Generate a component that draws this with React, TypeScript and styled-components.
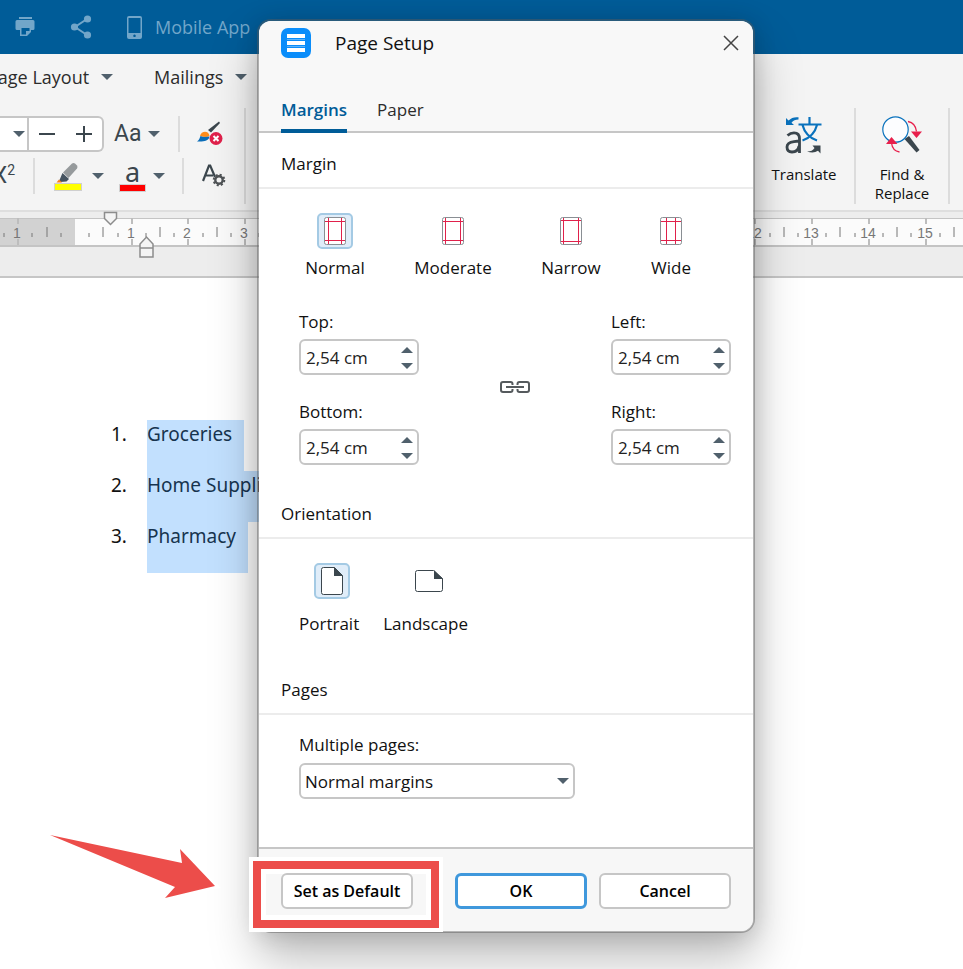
import React, { useState } from "react";
import styled, { createGlobalStyle, css } from "styled-components";

const UI = `"Open Sans", "Noto Sans", sans-serif`;
const SLATE = "#50606c";

const GlobalStyle = createGlobalStyle`
  *, *::before, *::after { box-sizing: border-box; }
  body { margin: 0; background: #fff; font-family: ${UI}; font-size: 17px; color: #111; }
  button, input, select { font: inherit; color: inherit; margin: 0; padding: 0; }
  button { background: none; border: 0; }
  svg { display: block; flex: none; }
`;

const Page = styled.div`
  position: relative;
  display: flex;
  flex-direction: column;
  min-height: 100vh;
  overflow: hidden;
`;

/* ---------- application window ---------- */

const TopBar = styled.header`
  display: flex;
  align-items: center;
  height: 54px;
  padding-left: 15px;
  gap: 35px;
  background: #005c98;
  color: #72a6c9;
`;

const TopButton = styled.button`
  display: flex;
  align-items: center;
  gap: 13px;
  color: inherit;
  font-size: 18px;
`;

const Menu = styled.nav`
  display: flex;
  align-items: center;
  height: 46px;
  margin-left: -13px;
  gap: 41px;
`;

const MenuButton = styled.button`
  display: flex;
  align-items: center;
  gap: 12px;
  font-size: 18px;
  color: #2c2c2c;
  white-space: nowrap;
`;

const Toolbar = styled.div`
  background: #f4f4f4;
  border-bottom: 2px solid #dedede;
`;

const Ribbon = styled.div`
  display: flex;
  height: 110px;
  padding: 8px 13px 6px 0;
`;

const FontTools = styled.div`
  display: flex;
  flex-direction: column;
  padding-top: 8px;
  gap: 6px;
  width: 244px;
`;

const ToolRow = styled.div`
  display: flex;
  align-items: center;
  height: 36px;
`;

const SizeBox = styled.div`
  display: flex;
  width: 104px;
  height: 36px;
  background: #fff;
  border: 2px solid #c6c6c6;
  border-left: 0;
  border-radius: 0 6px 6px 0;
`;

const SizeButton = styled.button<{ $narrow?: boolean }>`
  display: flex;
  align-items: center;
  justify-content: center;
  flex: ${(p) => (p.$narrow ? "none" : 1)};
  width: ${(p) => (p.$narrow ? "29px" : "auto")};
  ${(p) =>
    p.$narrow &&
    css`
      padding-left: 11px;
      border-right: 2px solid #c6c6c6;
    `}
`;

const ToolButton = styled.button<{ $left?: number; $gap?: number }>`
  display: flex;
  align-items: center;
  gap: ${(p) => p.$gap ?? 8}px;
  margin-left: ${(p) => p.$left ?? 0}px;
  color: #3b464d;
  font-family: Roboto, sans-serif;
  font-size: 23px;
  line-height: 28px;
`;

const Rule = styled.span<{ $left?: number }>`
  flex: none;
  align-self: stretch;
  width: 2px;
  margin-left: ${(p) => p.$left ?? 0}px;
  background: #dcdcdc;
`;

const Superscript = styled.span`
  width: 15px;
  display: flex;
  justify-content: flex-end;
  sup { font-size: 14px; line-height: 16px; }
`;

const FontColor = styled.span`
  display: flex;
  flex-direction: column;
  align-items: center;
  width: 27px;
  font-family: "Noto Sans", sans-serif;
  font-size: 27px;
  line-height: 24px;
  &::after {
    content: "";
    width: 27px;
    height: 8px;
    background: #f00;
    border: 1px solid #d0d0d0;
  }
`;

const Spacer = styled.div`
  flex: 1;
`;

const BigTool = styled.button<{ $width: number }>`
  display: flex;
  flex-direction: column;
  align-items: center;
  gap: 11px;
  width: ${(p) => p.$width}px;
  padding-top: 8px;
  font-size: 15px;
  line-height: 19px;
  color: #111;
`;

const RulerStrip = styled.div`
  height: 66px;
  padding-top: 6px;
  background: #ededed;
  border-bottom: 2px solid #c6c6c6;
`;

const RulerSvg = styled.svg`
  width: 100%;
  height: 29px;
  overflow: visible;
  text { font: 14px "Liberation Sans", sans-serif; fill: #777; }
`;

const Document = styled.main`
  flex: 1;
  padding: 142px 0 0 111px;
`;

const List = styled.ol`
  list-style: none;
  margin: 0;
  padding: 0;
  font-family: "Noto Sans", sans-serif;
  font-size: 19px;
  line-height: 28px;
`;

const Item = styled.li`
  display: flex;
  height: 51px;
`;

const Marker = styled.span`
  width: 36px;
`;

const Selected = styled.span`
  padding-right: 12px;
  background: #c2e0fe;
  color: #17344f;
`;

/* ---------- dialog ---------- */

const Dialog = styled.section`
  position: absolute;
  top: 19px;
  left: 257px;
  width: 498px;
  border: 2px solid rgba(90, 90, 90, 0.45);
  border-radius: 14px;
  background: #fff;
  background-clip: padding-box;
  box-shadow: 0 26px 48px rgba(0, 0, 0, 0.26), 0 2px 22px rgba(0, 0, 0, 0.14);
`;

const DialogHead = styled.header`
  padding: 7px 14px 0 22px;
  background: #f8f8f8;
  border-bottom: 2px solid #c6c6c6;
  border-radius: 12px 12px 0 0;
`;

const TitleRow = styled.div`
  display: flex;
  align-items: center;
  height: 30px;
`;

const Title = styled.h1`
  flex: 1;
  margin: 0 0 0 24px;
  font-size: 19px;
  font-weight: 400;
`;

const Close = styled.button`
  display: flex;
`;

const Tabs = styled.div`
  display: flex;
  gap: 30px;
  height: 73px;
  padding-top: 31px;
`;

const Tab = styled.button<{ $active?: boolean }>`
  height: 44px;
  border-bottom: 4px solid ${(p) => (p.$active ? "#005c98" : "transparent")};
  font-weight: ${(p) => (p.$active ? 600 : 400)};
  color: ${(p) => (p.$active ? "#005c98" : "#2c2c2c")};
`;

const SectionTitle = styled.h2`
  height: 56px;
  margin: 0;
  padding: 19px 22px 0;
  border-bottom: 2px solid #ececec;
  font-size: 17px;
  line-height: 24px;
  font-weight: 400;
`;

const Presets = styled.div`
  display: grid;
  grid-template-columns: 118px 118px 118px 82px;
  height: 121px;
  padding: 24px 17px 0;
`;

const Orientations = styled.div`
  display: flex;
  gap: 24px;
  height: 120px;
  padding: 24px 40px 0;
`;

const Choice = styled.label<{ $gap: number; $shift?: number }>`
  display: flex;
  flex-direction: column;
  align-items: center;
  gap: ${(p) => p.$gap}px;
  line-height: 24px;
  white-space: nowrap;
  svg { margin-left: ${(p) => p.$shift ?? 0}px; }
`;

const Radio = styled.input`
  position: absolute;
  opacity: 0;
  width: 1px;
  height: 1px;
`;

const Fields = styled.div`
  display: grid;
  grid-template-columns: 120px 1fr 120px;
  row-gap: 30px;
  padding: 0 22px 23px 40px;
`;

const Field = styled.div`
  display: flex;
  flex-direction: column;
  height: 60px;
  label { line-height: 24px; }
`;

const NumberBox = styled.div`
  display: flex;
  flex: none;
  height: 36px;
  margin-top: 5px;
  padding-right: 4px;
  background: #fff;
  border: 2px solid #c6c6c6;
  border-radius: 6px;
  input {
    flex: 1;
    min-width: 0;
    padding-left: 5px;
    border: 0;
    background: none;
    outline: 0;
    color: #222;
  }
`;

const Steps = styled.div`
  display: flex;
  flex-direction: column;
  justify-content: center;
  gap: 10px;
  padding-top: 2px;
  button { display: flex; }
`;

const Link = styled.button`
  grid-column: 2;
  grid-row: 1 / span 2;
  display: flex;
  align-items: center;
  justify-content: center;
  padding-top: 3px;
`;

const PagesBody = styled.div`
  display: flex;
  flex-direction: column;
  height: 132px;
  padding: 18px 40px 0;
  label { line-height: 24px; }
`;

const SelectBox = styled.div`
  position: relative;
  width: 276px;
  margin-top: 6px;
  select {
    width: 100%;
    height: 36px;
    padding: 0 30px 0 4px;
    appearance: none;
    background: #fff;
    border: 2px solid #c6c6c6;
    border-radius: 6px;
  }
  svg {
    position: absolute;
    top: 15px;
    right: 6px;
    pointer-events: none;
  }
`;

const Footer = styled.footer`
  display: flex;
  align-items: flex-start;
  gap: 12px;
  height: 84px;
  padding: 24px 22px 0;
  background: #f7f7f7;
  border-top: 2px solid #c6c6c6;
  border-radius: 0 0 12px 12px;
`;

const Action = styled.button<{ $primary?: boolean }>`
  display: block;
  width: 132px;
  height: 36px;
  background: #fff;
  border: ${(p) => (p.$primary ? "3px solid #3f98dc" : "2px solid #c6c6c6")};
  border-radius: 6px;
  font-size: 16px;
  font-weight: 600;
  color: #000;
  white-space: nowrap;
`;

const Highlighted = styled.div`
  position: relative;
  margin-right: auto;
`;

const Frame = styled.span`
  position: absolute;
  inset: -12px -26px -19px -28px;
  border: 8px solid #ec4d4a;
  box-shadow: 0 0 0 4px #fff, inset 0 0 0 5px #fff;
  pointer-events: none;
`;

const FrontAction = styled(Action)`
  position: relative;
  z-index: 1;
`;

const Pointer = styled.svg`
  position: absolute;
  left: 45px;
  top: 830px;
  pointer-events: none;
`;

/* ---------- drawings ---------- */

const Caret = ({ up = false }: { up?: boolean }) => (
  <svg width="12" height="6" viewBox="0 0 12 6" aria-hidden="true">
    <path d={up ? "M0 6 6 0l6 6z" : "M0 0h12L6 6z"} fill={SLATE} />
  </svg>
);

const PrintIcon = () => (
  <svg width="20" height="20" viewBox="0 0 20 20" fill="currentColor">
    <path d="M4 0h13v2H4z" />
    <path
      fillRule="evenodd"
      d="M2 3h16q1.500 0 1.500 1.500v7q0 1.500-1.500 1.500h-2v2l-4 4H5v-6H2Q.5 13 .5 11.500v-7Q.5 3 2 3zM6.500 11v6.500h4.500V14h3.500v-3z"
    />
  </svg>
);

const ShareIcon = () => (
  <svg width="22" height="24" viewBox="0 0 22 24">
    <path d="M17 4 5 12l12 8" fill="none" stroke="currentColor" strokeWidth="2" />
    <g fill="currentColor">
      <circle cx="17.500" cy="4" r="3.600" />
      <circle cx="4.500" cy="12" r="3.600" />
      <circle cx="17.500" cy="20" r="3.600" />
    </g>
  </svg>
);

const PhoneIcon = () => (
  <svg width="15" height="23" viewBox="0 0 15 23">
    <path
      fillRule="evenodd"
      fill="currentColor"
      d="M2 0h11q2 0 2 2v19q0 2-2 2H2q-2 0-2-2V2q0-2 2-2zM1.500 2v15h12V2zM7.500 18.500a1.300 1.300 0 1 0 .01 0z"
    />
  </svg>
);

const BrushIcon = () => (
  <svg width="28" height="26" viewBox="0 0 28 26">
    <path d="M22 0.500l1 1.500L14 11.500 11 9z" fill="#3b464d" />
    <path d="M3 15C4 9.500 12 9 12.500 15q-3 2-9.500 0z" fill="#ff8c1a" />
    <path d="M3.500 15q3 1.500 9 .5C12 20 6 21 0 20.500 2.500 19 2.500 17 3.500 15z" fill="#0a6db8" />
    <circle cx="19" cy="17.500" r="6.500" fill="#e0214b" />
    <path d="M16.500 15l5 5m0-5l-5 5" stroke="#fff" strokeWidth="2" />
  </svg>
);

const HighlighterIcon = () => (
  <svg width="28" height="29" viewBox="0 0 28 29">
    <path d="M9 10.500 18 1.500q1.500-1 3 0l2 2q1 1.500 0 3L14.500 16z" fill="#969a9c" />
    <path d="M8.500 11 15 17l-2.500 2.500-6.500.5L5.500 18z" fill="#455360" />
    <path d="M5 17.500 8 20.500H2.500z" fill="#ff7f1a" />
    <rect x=".5" y="21.500" width="27" height="7" fill="#ff0" stroke="#cfcfcf" />
  </svg>
);

const TextEffectsIcon = () => (
  <svg width="24" height="24" viewBox="0 0 24 24">
    <path d="M1 17 7 1.500h1.200L13 13M3 11.500h8" fill="none" stroke="#3b464d" strokeWidth="2.200" />
    <circle cx="17" cy="16" r="3.700" fill="none" stroke="#4f5356" strokeWidth="2.400" />
    <circle cx="17" cy="16" r="5.300" fill="none" stroke="#4f5356" strokeWidth="2" strokeDasharray="2.080 2.080" />
  </svg>
);

const TranslateIcon = () => (
  <svg width="38" height="38" viewBox="0 0 38 38">
    <path d="M1 2v7h8L6.500 6.700Q9 3.500 13.500 3.500V1.300Q7.500.5 3.500 4.500z" fill="#0a72bd" />
    <path d="M24.500 1v7M13.500 8.500h23M17.500 9q3 11.500 14.500 15.500M32 9q-3 11.500-14.500 15.500" fill="none" stroke="#0a72bd" strokeWidth="2.200" />
    <path d="M2.500 19.500q3-2.700 6.500-2.700 5.500 0 5.500 6V37M14 25l-5 .6q-7 .9-7 5.400 0 5 5 5 6 0 7-6" fill="none" stroke="#3b464d" strokeWidth="2.800" />
    <path d="M35.500 29.500v8l-2.500-2.700q-4.500 3.200-11 .7 5.500 0 7.500-3.500l-2-2.500z" fill="#3b464d" />
  </svg>
);

const FindIcon = () => (
  <svg width="40" height="38" viewBox="0 0 40 38">
    <path d="M22.500 23 27 20l10.500 14-3 2.500z" fill="#3b464d" />
    <circle cx="13.500" cy="13.500" r="12.700" fill="#fcfdff" stroke="#0a72bd" strokeWidth="1.200" />
    <path d="M26 5.500q7.500 1.500 8.500 10M17.500 36q-7-1-8-9" fill="none" stroke="#e8204c" strokeWidth="1.300" />
    <path d="M29 15.500h11l-5.500 6.500zM4 28h11.500L9.500 21z" fill="#e8204c" />
  </svg>
);

const AppIcon = () => (
  <svg width="30" height="30" viewBox="0 0 30 30">
    <rect width="30" height="30" rx="7" fill="#0a8dfa" />
    <path d="M6 6h18v4H6zM6 13h18v4H6zM6 20h18v4H6z" fill="#fff" />
    <path d="M6 11h18v1H6zM6 18h18v1H6z" fill="#5db3fb" />
  </svg>
);

const SelectedTile = () => (
  <rect x="1" y="1" width="34" height="34" rx="4" fill="#e0edf9" stroke="#a4cae4" strokeWidth="2" />
);

const MarginIcon = ({ x, y, selected }: { x: number; y: number; selected: boolean }) => (
  <svg width="36" height="36" viewBox="0 0 36 36">
    {selected && <SelectedTile />}
    <rect x="7.500" y="4.500" width="21" height="27" rx="2" fill="#fff" stroke="#8a8f94" />
    <path
      d={`M${7.5 + x} 5v26M${28.5 - x} 5v26M8 ${4.5 + y}h20M8 ${31.5 - y}h20`}
      stroke="#e0214b"
    />
  </svg>
);

const SheetIcon = ({ landscape = false, selected }: { landscape?: boolean; selected: boolean }) => (
  <svg width="36" height="36" viewBox="0 0 36 36">
    {selected && <SelectedTile />}
    {landscape ? (
      <>
        <path d="M6.500 7.500h16l9 8v11q0 2-2 2h-23q-2 0-2-2v-17q0-2 2-2z" fill="#fff" stroke="#3b464d" />
        <path d="M23 7v9h9z" fill="#3b464d" />
      </>
    ) : (
      <>
        <path d="M9.500 4.500h11l8 8v17q0 2-2 2h-17q-2 0-2-2v-23q0-2 2-2z" fill="#fff" stroke="#3b464d" />
        <path d="M20 4v9h9z" fill="#3b464d" />
      </>
    )}
  </svg>
);

const LinkIcon = () => (
  <svg width="30" height="12" viewBox="0 0 30 12" fill="none" stroke="#555a5d" strokeWidth="2">
    <path d="M12.500 4V3q0-2-2-2H3Q1 1 1 3v6q0 2 2 2h7.500q2 0 2-2V8" />
    <path d="M17.500 4V3q0-2 2-2H27q2 0 2 2v6q0 2-2 2h-7.500q-2 0-2-2V8" />
    <path d="M6 6h18" />
  </svg>
);

const ZERO = 75;
const UNIT = 56.7;

function Ruler() {
  const quarters = Array.from({ length: 68 }, (_, i) => i - 5).filter((q) => q !== 0);
  return (
    <RulerSvg aria-label="Ruler">
      <rect width="100%" height="29" fill="#fbfbfb" />
      <rect width={ZERO} height="29" fill="#d2d2d2" />
      <rect width="100%" height="1" fill="#c4c4c4" />
      <rect y="27" width="100%" height="2" fill="#c4c4c4" />
      {quarters.map((q) => {
        const x = Math.round(ZERO + (q * UNIT) / 4);
        if (q % 4 === 0) {
          return (
            <g key={q}>
              <path d={`M${x} 0v6M${x} 21v6`} stroke="#bdbdbd" strokeWidth="2" />
              <text x={x - 1} y="20" textAnchor="middle">
                {Math.abs(q / 4)}
              </text>
            </g>
          );
        }
        return <path key={q} d={q % 2 === 0 ? `M${x} 9v10` : `M${x} 15v4`} stroke="#777" />;
      })}
      <g fill="#f4f4f4" stroke="#8c8c8c" strokeWidth="1.500">
        <path d="M104.500-5.500h12v6l-6 6-6-6z" />
        <path d="M140 39V26l6.500-7 6.500 7v13zM140 30h13" />
      </g>
    </RulerSvg>
  );
}

/* ---------- page ---------- */

const margins = [
  { name: "Normal", x: 4, y: 4 },
  { name: "Moderate", x: 3, y: 4 },
  { name: "Narrow", x: 3, y: 3 },
  { name: "Wide", x: 6, y: 4 },
];

function Measure({ name }: { name: string }) {
  const [value, setValue] = useState(2.54);
  const step = (by: number) => setValue((v) => Math.max(0, Math.round((v + by) * 100) / 100));
  const id = `margin-${name.toLowerCase()}`;
  return (
    <Field>
      <label htmlFor={id}>{name}:</label>
      <NumberBox>
        <input id={id} type="text" readOnly value={`${value.toFixed(2).replace(".", ",")} cm`} />
        <Steps>
          <button type="button" aria-label={`Increase ${name}`} onClick={() => step(0.1)}>
            <Caret up />
          </button>
          <button type="button" aria-label={`Decrease ${name}`} onClick={() => step(-0.1)}>
            <Caret />
          </button>
        </Steps>
      </NumberBox>
    </Field>
  );
}

function PageSetup() {
  const [margin, setMargin] = useState("Normal");
  const [orientation, setOrientation] = useState("Portrait");
  return (
    <Dialog role="dialog" aria-labelledby="page-setup-title">
      <DialogHead>
        <TitleRow>
          <AppIcon />
          <Title id="page-setup-title">Page Setup</Title>
          <Close type="button" aria-label="Close">
            <svg width="16" height="16" viewBox="0 0 16 16">
              <path d="M1 1l14 14M15 1L1 15" stroke="#444" strokeWidth="1.500" />
            </svg>
          </Close>
        </TitleRow>
        <Tabs role="tablist">
          <Tab role="tab" aria-selected="true" $active>Margins</Tab>
          <Tab role="tab" aria-selected="false">Paper</Tab>
        </Tabs>
      </DialogHead>

      <SectionTitle>Margin</SectionTitle>
      <Presets>
        {margins.map((m) => (
          <Choice key={m.name} $gap={7}>
            <Radio type="radio" name="margin" checked={margin === m.name} onChange={() => setMargin(m.name)} />
            <MarginIcon x={m.x} y={m.y} selected={margin === m.name} />
            {m.name}
          </Choice>
        ))}
      </Presets>
      <Fields>
        <Measure name="Top" />
        <Link type="button" aria-label="Link margins"><LinkIcon /></Link>
        <Measure name="Left" />
        <Measure name="Bottom" />
        <Measure name="Right" />
      </Fields>

      <SectionTitle>Orientation</SectionTitle>
      <Orientations>
        {["Portrait", "Landscape"].map((name) => (
          <Choice key={name} $gap={13} $shift={6}>
            <Radio type="radio" name="orientation" checked={orientation === name} onChange={() => setOrientation(name)} />
            <SheetIcon landscape={name === "Landscape"} selected={orientation === name} />
            {name}
          </Choice>
        ))}
      </Orientations>

      <SectionTitle>Pages</SectionTitle>
      <PagesBody>
        <label htmlFor="multiple-pages">Multiple pages:</label>
        <SelectBox>
          <select id="multiple-pages" defaultValue="Normal margins">
            <option>Normal margins</option>
          </select>
          <Caret />
        </SelectBox>
      </PagesBody>

      <Footer>
        <Highlighted>
          <Frame />
          <FrontAction type="button">Set as Default</FrontAction>
        </Highlighted>
        <Action type="button" $primary>OK</Action>
        <Action type="button">Cancel</Action>
      </Footer>
    </Dialog>
  );
}

export default function App() {
  return (
    <Page>
      <GlobalStyle />
      <TopBar>
        <TopButton aria-label="Print"><PrintIcon /></TopButton>
        <TopButton aria-label="Share"><ShareIcon /></TopButton>
        <TopButton><PhoneIcon />Mobile App</TopButton>
      </TopBar>
      <Toolbar>
        <Menu>
          <MenuButton>Page Layout<Caret /></MenuButton>
          <MenuButton>Mailings<Caret /></MenuButton>
        </Menu>
        <Ribbon>
          <FontTools>
            <ToolRow>
              <SizeBox>
                <SizeButton $narrow aria-label="Font size"><Caret /></SizeButton>
                <SizeButton aria-label="Decrease font size">
                  <svg width="16" height="16"><path d="M0 8h16" stroke="#3b464d" strokeWidth="2" /></svg>
                </SizeButton>
                <SizeButton aria-label="Increase font size">
                  <svg width="16" height="16"><path d="M0 8h16M8 0v16" stroke="#3b464d" strokeWidth="2" /></svg>
                </SizeButton>
              </SizeBox>
              <ToolButton $left={10} $gap={6}>Aa<Caret /></ToolButton>
              <Rule $left={18} />
              <ToolButton $left={17} aria-label="Clear formatting"><BrushIcon /></ToolButton>
            </ToolRow>
            <ToolRow>
              <ToolButton aria-label="Superscript">
                <Superscript>X<sup>2</sup></Superscript>
              </ToolButton>
              <Rule $left={18} />
              <ToolButton $left={19} $gap={10} aria-label="Highlight color"><HighlighterIcon /><Caret /></ToolButton>
              <ToolButton $left={15} $gap={7} aria-label="Font color"><FontColor>a</FontColor><Caret /></ToolButton>
              <Rule $left={17} />
              <ToolButton $left={18} aria-label="Text effects"><TextEffectsIcon /></ToolButton>
            </ToolRow>
          </FontTools>
          <Rule />
          <Spacer />
          <BigTool $width={100}><TranslateIcon />Translate</BigTool>
          <Rule />
          <BigTool $width={92}><FindIcon />Find &amp; Replace</BigTool>
          <Rule />
        </Ribbon>
      </Toolbar>
      <RulerStrip><Ruler /></RulerStrip>
      <Document>
        <List>
          <Item><Marker>1.</Marker><Selected>Groceries</Selected></Item>
          <Item><Marker>2.</Marker><Selected>Home Supplies</Selected></Item>
          <Item><Marker>3.</Marker><Selected>Pharmacy</Selected></Item>
        </List>
      </Document>
      <PageSetup />
      <Pointer width="180" height="76" viewBox="45 830 180 76" aria-hidden="true">
        <path d="M50 835 182 863 180 849 215 886 165 898 175 887z" fill="#ec4d4a" stroke="#fff" strokeWidth="6" paintOrder="stroke" />
      </Pointer>
    </Page>
  );
}
